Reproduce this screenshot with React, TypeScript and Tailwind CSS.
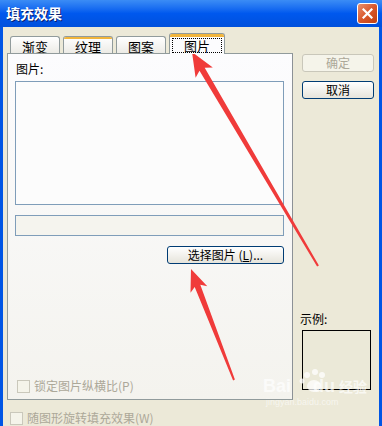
const font = "font-['Noto_Sans_CJK_SC',sans-serif]";

const Tab = ({ label, active, hot }: { label: string; active?: boolean; hot?: boolean }) => {
  if (active) {
    return (
      <div className="relative z-10 -mb-px flex h-[21px] w-[56px] flex-col rounded-t-[3px] border border-b-0 border-[#919B9C] bg-[#FCFCFE]">
        <div className="h-[3px] rounded-t-[2px] bg-[#F1B53C]" />
        <div className="flex flex-1 items-start justify-center pt-px">
          <span className="border border-dotted border-black px-[11px] text-[13px] leading-[13px]">{label}</span>
        </div>
      </div>
    );
  }
  return (
    <div className="flex h-[17px] w-[50px] flex-col rounded-t-[3px] border border-b-0 border-[#919B9C] bg-gradient-to-b from-white to-[#ECEBE6]">
      {hot ? <div className="h-[2px] rounded-t-[2px] bg-[#F1B53C]" /> : <div className="h-[2px]" />}
      <div className="flex flex-1 items-center justify-center text-[13px] leading-[13px]">{label}</div>
    </div>
  );
};

const Check = ({ children }: { children: React.ReactNode }) => (
  <div className="flex items-center gap-[4px] text-[#ACA899]">
    <div className="h-[13px] w-[13px] border border-[#CAC8BB] bg-[#F5F4EA]" />
    <span className="leading-[14px]">{children}</span>
  </div>
);

const Arrows = () => (
  <svg className="pointer-events-none absolute left-0 top-0" width="382" height="426" viewBox="0 0 382 426">
    <polygon
      fill="#F03B3A"
      points="192,52 212.8,67.6 204.7,67.7 318.9,265.5 317.1,266.5 199.5,70.7 195.6,77.8"
    />
    <polygon
      fill="#F03B3A"
      points="191,269 207.3,286.3 200.3,284.7 234.9,379.6 233.1,380.4 194.7,286.9 190.5,292.7"
    />
    {/* watermark paw */}
    <g fill="#FFFFFF" opacity="0.75">
      <circle cx="307" cy="375" r="3" />
      <circle cx="315" cy="372" r="3" />
      <circle cx="322" cy="375" r="3" />
      <circle cx="302" cy="381" r="2.5" />
      <ellipse cx="314" cy="386" rx="7" ry="6" />
    </g>
  </svg>
);

export default function App() {
  return (
    <div className={`relative flex h-[426px] w-[382px] flex-col overflow-hidden bg-[#0055E5] text-[12px] text-black ${font}`}>
      {/* title bar */}
      <div className="flex h-[27px] shrink-0 items-center justify-between bg-gradient-to-b from-[#3B8CF5] via-[#0058EE] to-[#0050DC] pl-[6px] pr-[4px]">
        <span className="text-[14px] font-bold text-white [text-shadow:1px_1px_0_#0A1E6E]">填充效果</span>
        <div className="flex h-[21px] w-[21px] items-center justify-center rounded-[3px] border border-white bg-gradient-to-br from-[#E8906E] via-[#D9572A] to-[#C2400E]">
          <svg width="11" height="11" viewBox="0 0 11 11">
            <path d="M1.5 1.5 L9.5 9.5 M9.5 1.5 L1.5 9.5" stroke="white" strokeWidth="2.2" strokeLinecap="square" />
          </svg>
        </div>
      </div>

      {/* body */}
      <div className="mx-[3px] flex flex-1 bg-[#ECE9D8]">
        {/* left column */}
        <div className="flex flex-col pl-[4px] pt-[6px]">
          <div className="flex h-[20px] items-end gap-[3px] pl-[3px]">
            <Tab label="渐变" />
            <Tab label="纹理" hot />
            <Tab label="图案" />
            <Tab label="图片" active />
          </div>
          <div className="flex h-[347px] w-[286px] flex-col border border-[#919B9C] border-r-[#8C9196] bg-gradient-to-b from-[#FCFCFE] to-[#F4F3EE] pl-[7px] pr-[7px] pt-[8px] pb-[6px]">
            <div className="ml-px leading-[14px]">图片:</div>
            <div className="mt-[5px] h-[124px] w-[269px] border border-[#7F9DB9] bg-[#FCFCFC]" />
            <div className="mt-[10px] h-[21px] w-[269px] border border-[#7F9DB9] bg-[#F5F4EE]" />
            <div className="mt-[10px] flex w-[269px] justify-end">
              <div className="flex h-[18px] w-[117px] items-center justify-center rounded-[3px] border border-[#003C74] bg-gradient-to-b from-white to-[#E6E4DB] leading-[14px]">
                选择图片 (<span className="underline">L</span>)...
              </div>
            </div>
            <div className="flex-1" />
            <div className="ml-[2px]">
              <Check>锁定图片纵横比(P)</Check>
            </div>
          </div>
          <div className="mt-[11px] pl-[3px]">
            <Check>随图形旋转填充效果(W)</Check>
          </div>
        </div>

        {/* right column */}
        <div className="ml-[9px] flex flex-col pt-[27px] pb-[36px]">
          <div className="flex h-[18px] w-[72px] items-center justify-center rounded-[3px] border border-[#C9C7BA] bg-[#F5F4EA] text-[#ACA899]">
            确定
          </div>
          <div className="mt-[9px] flex h-[18px] w-[72px] items-center justify-center rounded-[3px] border border-[#003C74] bg-gradient-to-b from-white to-[#E6E4DB]">
            取消
          </div>
          <div className="flex-1" />
          <div className="-ml-[2px] leading-[14px]">示例:</div>
          <div className="mt-[4px] h-[60px] w-[69px] border border-black bg-[#EBE9D8]" />
        </div>
      </div>

      <div className="pointer-events-none absolute left-[263px] top-[377px] text-[18px] font-bold leading-[18px] text-white/70 font-['Liberation_Sans',sans-serif]">
        Bai<span className="ml-[22px]">du</span>
        <span className="ml-[4px] text-[14px] font-['Noto_Sans_CJK_SC',sans-serif]">经验</span>
      </div>
      <div className="pointer-events-none absolute left-[266px] top-[397px] text-[9px] leading-[10px] text-white/60 font-['Liberation_Sans',sans-serif]">
        jingyan.baidu.com
      </div>
      <Arrows />
    </div>
  );
}
